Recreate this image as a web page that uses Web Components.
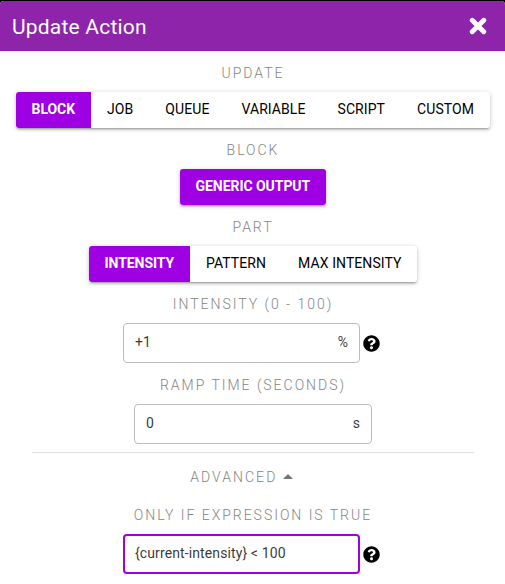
<!DOCTYPE html>
<html lang="en">
<head>
<meta charset="utf-8">
<title>Update Action</title>
<style>
html,body{margin:0;height:100%;background:#000;overflow:hidden}
body{font-family:Roboto,"Liberation Sans",sans-serif;font-size:14px;color:#000}
</style>
</head>
<body>
<action-dialog heading="Update Action">
  <field-label>UPDATE</field-label>
  <button-group style="--group-width:474px;--first-width:75px"><option-button active>BLOCK</option-button><option-button>JOB</option-button><option-button>QUEUE</option-button><option-button>VARIABLE</option-button><option-button>SCRIPT</option-button><option-button>CUSTOM</option-button></button-group>
  <field-label>BLOCK</field-label>
  <button-group style="--group-width:146px;--first-width:146px"><option-button active>GENERIC OUTPUT</option-button></button-group>
  <field-label>PART</field-label>
  <button-group style="--group-width:328px;--first-width:101px"><option-button active>INTENSITY</option-button><option-button>PATTERN</option-button><option-button>MAX INTENSITY</option-button></button-group>
  <field-label>INTENSITY (0 - 100)</field-label>
  <text-field suffix="%" help style="--field-width:237px">+1</text-field>
  <field-label>RAMP TIME (SECONDS)</field-label>
  <text-field suffix="s">0</text-field>
  <section-line></section-line>
  <field-label style="--label-height:40px;--label-top:14px;letter-spacing:2.05px">ADVANCED<svg slot="icon" width="10" height="5" viewBox="0 0 10 5" style="margin:0 23px 0 5.500px;vertical-align:3px"><path d="M5 0 10 5H0z" fill="#757575"/></svg></field-label>
  <field-label>ONLY IF EXPRESSION IS TRUE</field-label>
  <text-field focused help style="--field-width:237px">{current-intensity} &lt; 100</text-field>
</action-dialog>
<script>
const define = (name, html) => customElements.define(name, class extends HTMLElement {
  constructor() {
    super();
    const t = document.createElement('template');
    t.innerHTML = typeof html === 'function' ? html(this) : html;
    this.attachShadow({mode: 'open'}).append(t.content.cloneNode(true));
  }
});
define('action-dialog', el => `
<style>
:host{display:flex;flex-direction:column;box-sizing:border-box;height:583px;margin-top:1px;background:#fff;border-radius:4px 4px 0 0;overflow:hidden}
header{display:flex;align-items:center;justify-content:space-between;box-sizing:border-box;height:50px;flex:none;padding:1px 18px 0 12px;background:#8e24aa;color:#fff;font-size:21px;line-height:32px;letter-spacing:.2px}
svg{display:block;margin-bottom:1px}
main{display:flex;flex-direction:column;align-items:center;padding-left:1px}
</style>
<header><span>${el.getAttribute('heading')}</span>
<svg width="18" height="18" viewBox="0 0 18 18"><path d="M3.200 3.200 14.800 14.800M14.800 3.200 3.200 14.800" stroke="#fff" stroke-width="4.800" stroke-linecap="round"/></svg></header>
<main><slot></slot></main>`);
define('field-label', `
<style>
:host{display:block;box-sizing:border-box;height:var(--label-height,41px);padding-top:var(--label-top,12px);line-height:20px;font-size:14px;font-weight:300;letter-spacing:1.98px;color:#858585;white-space:nowrap}
</style><slot></slot><slot name="icon"></slot>`);
define('button-group', `
<style>
:host{display:flex;width:var(--group-width,auto);height:36px;border-radius:3px;box-shadow:0 1px 5px rgba(0,0,0,.2),0 2px 2px rgba(0,0,0,.14),0 3px 1px -2px rgba(0,0,0,.12)}
</style><slot></slot>`);
define('option-button', `
<style>
:host{display:flex;align-items:center;box-sizing:border-box;flex:none;padding:0 16px 2px;height:36px;font-weight:450;line-height:24px;letter-spacing:.08px;white-space:nowrap}
:host([active]){background:#9f00e3;color:#fff;font-weight:700;letter-spacing:-.05px}
:host(:first-child){width:var(--first-width);border-radius:3px 0 0 3px;padding-left:15.500px;padding-right:0}
:host(:last-child){padding-right:0}
:host(:only-child){border-radius:3px}
</style><slot></slot>`);
define('text-field', el => `
<style>
:host{display:flex;align-items:center;gap:3px}
:host([help]){margin-right:4px}
.box{display:flex;justify-content:space-between;align-items:center;box-sizing:border-box;width:var(--field-width,238px);height:40px;padding:0 11px 2px;border:1px solid #bdbdbd;border-radius:4px;color:rgba(0,0,0,.8);line-height:24px;letter-spacing:.11px}
:host([help]) .box{padding:0 10.500px 2px 11.500px}
:host([focused]) .box{border:2px solid #9f00e3;padding:0 10px 2px 10.500px}
svg{display:block}
</style>
<div class="box"><span><slot></slot></span><span>${el.getAttribute('suffix') || ''}</span></div>
${el.hasAttribute('help') ? '<svg width="17" height="17" viewBox="0 0 512 512"><path fill="#000" d="M504 256c0 137-111 248-248 248S8 393 8 256C8 119 119 8 256 8s248 111 248 248zM262.700 90c-54.500 0-89.300 23-116.500 63.800-3.500 5.300-2.400 12.400 2.700 16.300l34.700 26.300c5.200 3.900 12.600 3 16.700-2.100 17.900-22.700 30.100-35.800 57.300-35.800 20.400 0 45.700 13.100 45.700 33 0 15-12.400 22.700-32.500 34C247.100 238.500 216 255 216 296v4c0 6.600 5.400 12 12 12h56c6.600 0 12-5.400 12-12v-1.300c0-28.600 83.800-29.800 83.800-107.200 0-58.300-60.500-101.500-117.100-101.500zM256 338c-25.400 0-46 20.600-46 46s20.600 46 46 46 46-20.600 46-46-20.600-46-46-46z"/></svg>' : ''}`);
define('section-line', `
<style>:host{display:block;width:442px;height:1px;margin-top:8px;background:#dfdfdf}</style>`);
</script>
</body>
</html>
